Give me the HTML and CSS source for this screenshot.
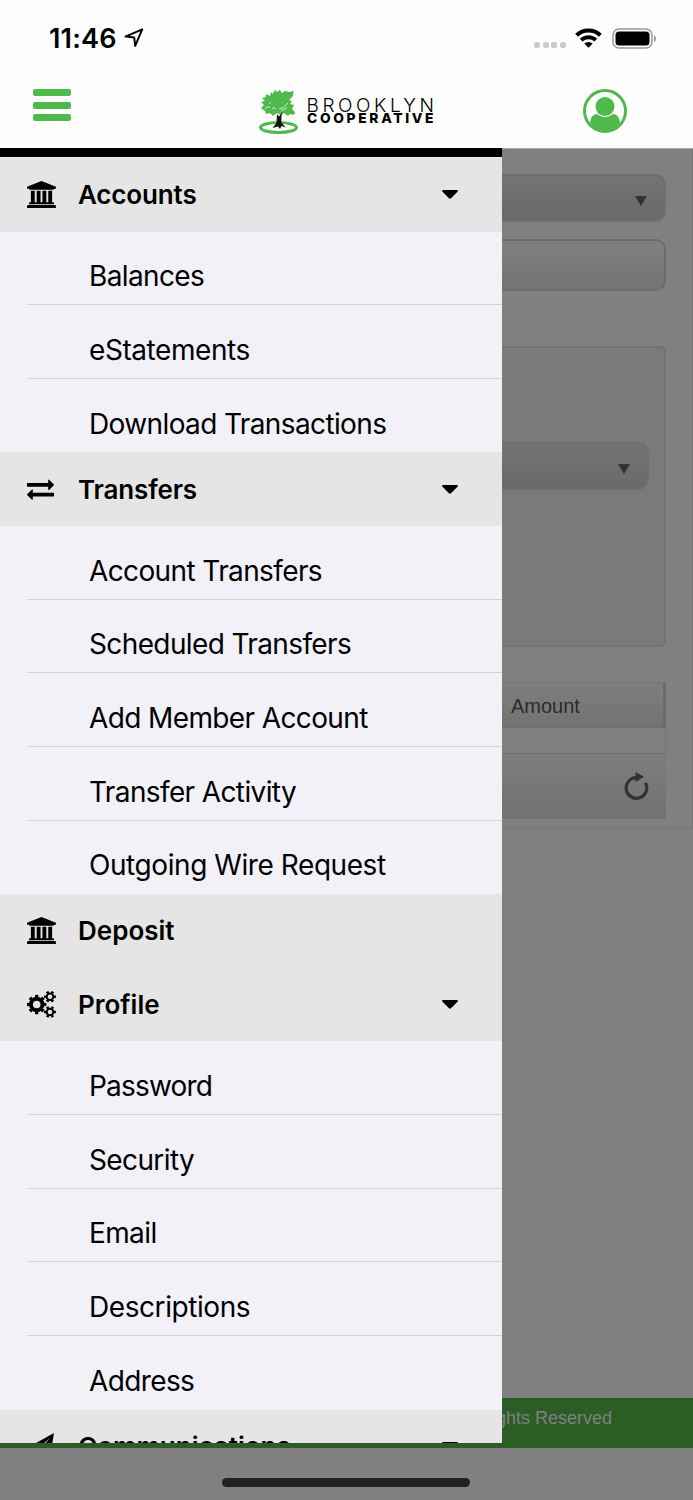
FILE: index.html
```html
<!DOCTYPE html>
<html lang="en">
<head>
<meta charset="utf-8">
<meta name="viewport" content="width=device-width">
<title>Brooklyn Cooperative</title>
<link rel="stylesheet" href="styles.css">
</head>
<body>
<svg width="0" height="0" class="defs">
  <symbol id="bank" viewBox="0 128 1920 1792"><path d="M960 128l960 384v128h-128q0 26-20.500 45t-48.500 19h-1526q-28 0-48.500-19t-20.500-45h-128v-128zM256 768h256v768h128v-768h256v768h128v-768h256v768h128v-768h256v768h59q28 0 48.500 19t20.500 45v64h-1664v-64q0-26 20.500-45t48.500-19h59v-768zM1851 1728q28 0 48.500 19t20.500 45v128h-1920v-128q0-26 20.500-45t48.500-19h1782z"/></symbol>
  <symbol id="caret" viewBox="0 0 16 9"><path d="M1 0H15Q16.500 .5 15.500 1.700L9 8.300Q8 9.200 7 8.300L.5 1.700Q-.5 .5 1 0Z"/></symbol>
</svg>
<header class="header">
  <div class="status">
    <div class="clock">11:46</div>
    <svg class="location" viewBox="0 0 20 20"><path d="M1.500 8.600L18.200 1.400L11.200 17.800L10.200 9.500Z" fill="none" stroke="#000" stroke-width="2" stroke-linejoin="round"/></svg>
    <div class="dots"><i></i><i></i><i></i><i></i></div>
    <svg class="wifi" viewBox="0 0 27 20"><g fill="none" stroke="#000" stroke-width="4"><path d="M1.600 7.300A17 17 0 0 1 25.400 7.300"/><path d="M6.200 12.100A10.500 10.500 0 0 1 20.800 12.100"/></g><path d="M13.500 19.800L9.300 15.600A6 6 0 0 1 17.700 15.600Z"/></svg>
    <svg class="battery" viewBox="0 0 45 21"><rect x="1" y="1" width="39" height="19" rx="6" fill="none" stroke="#999" stroke-width="1.500"/><rect x="3.500" y="3.500" width="34" height="14" rx="3.500"/><path d="M42 7Q44 8 44 10.500T42 14Z" fill="#999"/></svg>
  </div>
  <div class="brandbar">
    <div class="menu"><i></i><i></i><i></i></div>
    <svg class="logo" viewBox="0 0 178 48">
      <ellipse cx="19.500" cy="39.500" rx="18" ry="5" fill="none" stroke="#4fb94b" stroke-width="3"/>
      <path d="M12 4L13.500 6L16 2L18 4L21 2L23 5L26 3L31 4L34.500 2.500L34 8L30 12L33 13L31 16L35 17L33 21L36 24L35 27L31 26L29 28L25 25L22 27L18 25L14 28L11 25L7 26L6 23L2 20L5 17L2 14L6 13L3 10L7 9L7 6L11 8Z" fill="#4fb94b"/>
      <path d="M6 21Q9 17 11 20M13 21Q15 18 17 21M20 21Q25 21 29 15M12 14L10 16M22 23L28 20" fill="none" stroke="#dff1dc" stroke-width=".9"/>
      <path d="M18 26L20 28.500L23.500 24L22.500 28L22.300 34L26.500 39.500L22.500 38L21 41L19 38.500L13.500 40L17.500 35Z" fill="#111"/>
      <text class="brand-light" x="47.500" y="23.500" textLength="127.500">BROOKLYN</text>
      <text class="brand-bold" x="48" y="35" textLength="126.500">COOPERATIVE</text>
    </svg>
    <svg class="avatar" viewBox="0 0 44 44"><circle cx="22" cy="22" r="20.500" fill="#fff" stroke="#4fb94b" stroke-width="3"/><circle cx="22" cy="17.500" r="9.500" fill="#4fb94b"/><path d="M7 34Q7.500 25.500 14 25Q22 31.500 30 25Q36.500 25.500 37 34Q31 42.500 22 42.500T7 34Z" fill="#4fb94b"/></svg>
  </div>
</header>
<main class="stage">
  <section class="content">
    <div class="select"><b></b></div>
    <div class="input"></div>
    <div class="panel"><div class="select"><b></b></div></div>
    <div class="grid">
      <div class="grid-head">Amount</div>
      <div class="grid-row"></div>
      <div class="grid-foot"><svg class="refresh" viewBox="0 0 26 28"><path d="M22.300 10.800A10.300 10.300 0 1 1 13 5.700" fill="none" stroke="#333" stroke-width="3.200"/><path d="M12.500 0L21 4.700L12.500 10Z" fill="#333"/></svg></div>
    </div>
  </section>
  <footer class="footer">All Rights Reserved</footer>
  <nav class="drawer">
    <div class="head"><svg class="bank"><use href="#bank"/></svg><span class="snug">Accounts</span><svg class="caret"><use href="#caret"/></svg></div>
    <div class="item"><span>Balances</span></div>
    <div class="item"><span class="loose">eStatements</span></div>
    <div class="item last"><span>Download Transactions</span></div>
    <div class="head"><svg class="exchange" viewBox="0 256 1792 1376"><path d="M1792 1184v192q0 13-9.500 22.500t-22.500 9.500h-1376v192q0 13-9.500 22.500t-22.500 9.500q-12 0-24-10l-319-320q-9-9-9-22 0-14 9-23l320-320q9-9 23-9 13 0 22.500 9.500t9.500 22.500v192h1376q13 0 22.500 9.500t9.500 22.500zm0-544q0 14-9 23l-320 320q-9 9-23 9-13 0-22.500-9.500t-9.500-22.500v-192h-1376q-13 0-22.500-9.500t-9.500-22.500v-192q0-13 9.500-22.500t22.500-9.500h1376v-192q0-14 9-23t23-9q12 0 24 10l319 319q9 9 9 23z"/></svg><span class="snug">Transfers</span><svg class="caret"><use href="#caret"/></svg></div>
    <div class="item"><span>Account Transfers</span></div>
    <div class="item"><span>Scheduled Transfers</span></div>
    <div class="item"><span>Add Member Account</span></div>
    <div class="item"><span>Transfer Activity</span></div>
    <div class="item last"><span class="loose">Outgoing Wire Request</span></div>
    <div class="head"><svg class="bank"><use href="#bank"/></svg><span>Deposit</span></div>
    <div class="head"><svg class="cogs" viewBox="0 0 29 27"><g fill="none" stroke="#000"><circle cx="9.700" cy="13.500" r="5.800" stroke-width="4"/><circle cx="9.700" cy="13.500" r="8.400" stroke-width="2.600" pathLength="16" stroke-dasharray="1 1" stroke-dashoffset=".5"/><circle cx="23" cy="5.700" r="3.300" stroke-width="2"/><circle cx="23" cy="5.700" r="4.900" stroke-width="2" pathLength="12" stroke-dasharray="1 1" stroke-dashoffset=".5"/><circle cx="23" cy="21" r="3.300" stroke-width="2"/><circle cx="23" cy="21" r="4.900" stroke-width="2" pathLength="12" stroke-dasharray="1 1" stroke-dashoffset=".5"/></g></svg><span>Profile</span><svg class="caret"><use href="#caret"/></svg></div>
    <div class="item"><span class="tight">Password</span></div>
    <div class="item"><span>Security</span></div>
    <div class="item"><span>Email</span></div>
    <div class="item"><span class="loose">Descriptions</span></div>
    <div class="item last"><span>Address</span></div>
    <div class="head"><svg class="plane" viewBox="0 0 27 27"><path d="M27 0L23 24L15 20.500L11 26V19L23 5L8 18L0 15Z"/></svg><span>Communications</span><svg class="caret"><use href="#caret"/></svg></div>
  </nav>
</main>
<div class="home"><i></i></div>
</body>
</html>
```
FILE: styles.css
```css
* { box-sizing: border-box; }
body { margin: 0; width: 693px; height: 1500px; overflow: hidden; display: flex; flex-direction: column; background: #808080; font-family: Inter, "Liberation Sans", sans-serif; color: #000; }
svg { display: block; flex: none; }
.defs { position: absolute; }

.header { height: 148px; flex: none; background: #fefefe; }
.status { height: 76px; display: flex; align-items: center; padding-left: 49px; }
.clock { width: 69px; font-size: 27px; font-weight: 600; letter-spacing: .2px; white-space: nowrap; }
.location { width: 20px; height: 20px; margin-left: 6px; }
.dots { display: flex; gap: 2.500px; margin: 14px 0 0 390px; }
.dots i { width: 6px; height: 6px; border-radius: 2px; background: #ccc; }
.wifi { width: 27px; height: 20px; margin-left: 9.500px; }
.battery { width: 45px; height: 21px; margin-left: 10px; }
.brandbar { display: flex; align-items: flex-start; padding-left: 33.400px; }
.menu { display: flex; flex-direction: column; gap: 5.500px; margin-top: 13.300px; }
.menu i { width: 37.500px; height: 7px; border-radius: 2px; background: #4fb94b; }
.logo { width: 178px; height: 48px; margin: 12px 0 0 188.500px; overflow: visible; }
.brand-light { font: 300 19px Inter, sans-serif; fill: #000; }
.brand-bold { font: 800 13.800px Inter, sans-serif; fill: #000; }
.avatar { width: 44px; height: 44px; margin: 13px 0 0 146.100px; }

.stage { position: relative; height: 1300px; flex: none; display: flex; flex-direction: column; justify-content: space-between; border-top: 1.500px solid #8fb58d; }
.content { height: 680px; padding: 25px 26px 0 0; border-right: 1px solid #757575; border-bottom: 1px solid #757575; display: flex; flex-direction: column; }
.select { display: flex; justify-content: flex-end; align-items: center; padding: 5px 17px 0 0; height: 48px; flex: none; border: 2px solid #6f6f6f; border-left: 0; border-radius: 0 11px 11px 0; background: linear-gradient(#747474, #696969); }
.select b { border: solid transparent; border-width: 10px 6.500px 0; border-top-color: #333; }
.input { height: 52px; flex: none; margin-top: 17px; border: 2px solid #6c6c6c; border-left: 0; border-radius: 0 10px 10px 0; background: linear-gradient(#7f7f7f, #757575); }
.panel { height: 301px; flex: none; margin-top: 55px; padding: 94px 15px 0 0; border: 2px solid #727272; border-left: 0; border-radius: 0 5px 5px 0; background: #7a7a7a; }
.grid { margin-top: 35px; }
.grid-head { height: 46px; padding: 0 0 0 511px; font: 20px/46px "Liberation Sans", sans-serif; color: #2b2b2b; border-top: 1px solid #757575; border-right: 3px solid #6c6c6c; border-bottom: 2px solid #707070; background: linear-gradient(#7e7e7e, #737373); }
.grid-row { height: 25px; border-right: 1px solid #757575; }
.grid-foot { height: 66px; display: flex; justify-content: flex-end; padding: 18px 17px 0 0; border-top: 1px solid #6a6a6a; background: linear-gradient(#7d7d7d, #727272); }
.refresh { width: 26px; height: 28px; }
.footer { height: 50px; padding: 9px 81px 0 0; text-align: right; font: 18px/23px "Liberation Sans", sans-serif; color: #808080; background: #2b5d25; }

.drawer { position: absolute; left: 0; top: -1px; width: 502px; height: 1295px; overflow: hidden; border-top: 9px solid #000; padding-top: .9px; background: #f2f1f7; }
.head, .item { height: 73.640px; display: flex; align-items: center; white-space: nowrap; }
.head { position: relative; background: #e5e5e5; padding: 0 0 0 27px; font-size: 26px; font-weight: 600; }
.head span { margin-left: auto; width: 424px; }
.head .snug { letter-spacing: -.15px; }
.head .caret { width: 16px; height: 9px; position: absolute; left: 441.500px; }
.item { padding: 17px 0 0 62px; margin-left: 27px; border-bottom: 1px solid #d2d2d7; font-size: 28px; letter-spacing: -.62px; }
.item .tight { letter-spacing: -.8px; }
.item .loose { letter-spacing: -.43px; }
.item.last { border-bottom-color: transparent; }
.bank { width: 29px; height: 27px; }
.exchange { width: 27px; height: 21px; }
.cogs { width: 29px; height: 27px; }
.plane { width: 27px; height: 27px; }

.home { flex: 1; display: flex; justify-content: center; align-items: flex-end; padding: 0 .5px 13.500px 0; }
.home i { width: 248px; height: 8.500px; border-radius: 5px; background: #222; }
```
